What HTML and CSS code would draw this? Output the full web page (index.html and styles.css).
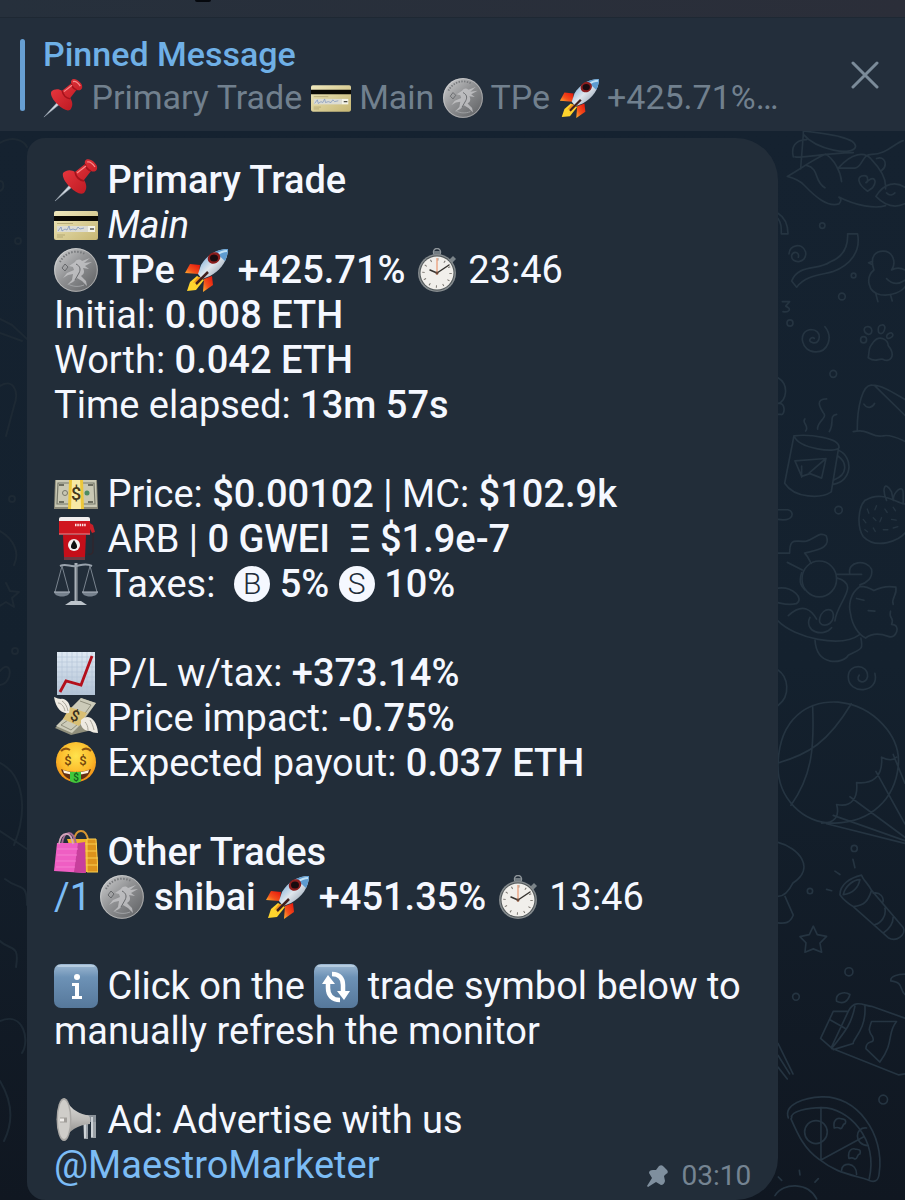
FILE: index.html
```html
<!DOCTYPE html>
<html lang="en">
<head>
    <meta charset="UTF-8">
    <meta name="viewport" content="width=device-width, initial-scale=1.0">
    <title>Trade Monitor</title>
    <link rel="stylesheet" href="styles.css">
</head>
<body>
    <!-- Shared icons -->
    <svg class="sprite" aria-hidden="true">
        <defs>
            <linearGradient id="gSilver" x1="0" y1="0" x2="1" y2="1">
                <stop offset="0" stop-color="#d3d4d5"/><stop offset=".45" stop-color="#929395"/><stop offset="1" stop-color="#5a5c5f"/>
            </linearGradient>
            <linearGradient id="gRed" x1="0" y1="0" x2="1" y2="1">
                <stop offset="0" stop-color="#ee3c43"/><stop offset="1" stop-color="#b5141d"/>
            </linearGradient>
            <linearGradient id="gCard" x1="0" y1="0" x2="1" y2="1">
                <stop offset="0" stop-color="#efe8bd"/><stop offset="1" stop-color="#c6b673"/>
            </linearGradient>
            <linearGradient id="gBody" x1="0" y1="0" x2="1" y2="1">
                <stop offset="0" stop-color="#4f97d3"/><stop offset=".5" stop-color="#dfe6ed"/><stop offset="1" stop-color="#76879a"/>
            </linearGradient>
            <linearGradient id="gFlame" x1="1" y1="0" x2="0" y2="1">
                <stop offset="0" stop-color="#e3120b"/><stop offset=".6" stop-color="#f4511c"/><stop offset="1" stop-color="#ffb52e"/>
            </linearGradient>
            <linearGradient id="gKey" x1="0" y1="0" x2="0" y2="1">
                <stop offset="0" stop-color="#9db8d2"/><stop offset=".3" stop-color="#6d92b6"/><stop offset="1" stop-color="#56789b"/>
            </linearGradient>
            <linearGradient id="gPaper" x1="0" y1="0" x2="0" y2="1">
                <stop offset="0" stop-color="#dfe9f3"/><stop offset="1" stop-color="#b3c3d5"/>
            </linearGradient>
            <linearGradient id="gHorn" x1="0" y1="0" x2="0" y2="1">
                <stop offset="0" stop-color="#e2e1df"/><stop offset=".5" stop-color="#bdbbb8"/><stop offset="1" stop-color="#7d7b79"/>
            </linearGradient>
            <radialGradient id="gFace" cx=".5" cy=".35" r=".65">
                <stop offset="0" stop-color="#ffe34d"/><stop offset=".65" stop-color="#fcb92a"/><stop offset="1" stop-color="#ef8d15"/>
            </radialGradient>
        </defs>

        <symbol id="pushpin" viewBox="0 0 44 44">
            <path d="M1 43 20 22l3 3z" fill="#cfd6de" stroke="#8d98a5" stroke-width=".6"/>
            <path d="M9 15c4-4 9-3 12-1l10-8c-1-4 2-6 6-4 4 2 7 6 6 9s-4 3-6 2l-7 9c3 5 3 9 0 13-4 2-9-1-14-6S8 19 9 15z" fill="url(#gRed)"/>
            <path d="M21 14c1 5 4 8 9 9M31 6c1 4 3 6 6 7" fill="none" stroke="#a4121b" stroke-width="1.6"/>
            <path d="M33 4c3-1 6 2 8 5M23 15l9-7" fill="none" stroke="#f98a8a" stroke-width="1.3"/>
        </symbol>

        <symbol id="card" viewBox="0 0 44 44">
            <rect y="8" width="44" height="29" rx="2" fill="url(#gCard)"/>
            <path d="M0 13h44v5H0z" fill="#0a0904"/>
            <path d="M3 23h31v6H3z" fill="#dcdcd4"/>
            <path d="M34 23h7v6h-7z" fill="#f4f3e8"/>
            <path d="m4 28 3-4 1 4 3-2 2 1 2-4 1 4 3-1 3 1 2-3 2 2 4-1" fill="none" stroke="#7f95bc" stroke-width=".8"/>
            <path d="M36 26h4" stroke="#4b4a42" stroke-width="1.4"/>
            <path d="M3 20.500h16M3 32h8M3 34h6" stroke="#a49a66" stroke-width=".7"/>
        </symbol>

        <symbol id="coin" viewBox="0 0 44 44">
            <circle cx="22" cy="22" r="22" fill="url(#gSilver)"/>
            <circle cx="22" cy="22" r="21.300" fill="none" stroke="#e0e1e2" stroke-opacity=".5" stroke-width="1"/>
            <path d="M6 14A18 18 0 0 1 31 6" fill="none" stroke="#77797c" stroke-width="2" stroke-dasharray="1.500 1.500"/>
            <path d="M21 14c2-3 5-3 7-1l8-3-6 5 8-1-7 4 4 3-6-1c2 4 1 6-2 8l5 5 1 5-5-5-5-3-4 4-6 3 5-5 1-6-5 1-5 3 4-5 7-3-1-3-4-1z" fill="#c9cacc" fill-opacity=".75"/>
            <path d="M22 16c4 2 5 5 3 9l-4 7M8 20l3-4 3 3-3 4z" fill="none" stroke="#66686b" stroke-width="1"/>
            <path d="M14 36c5 3 11 3 16 1" stroke="#a0a2a5" fill="none" stroke-width="1"/>
        </symbol>

        <symbol id="rocket" viewBox="0 0 44 44">
            <path d="M16 17 6 16 1 25l14 1z" fill="url(#gFlame)"/>
            <path d="m28 28 1 9-10 7 1-13z" fill="url(#gFlame)"/>
            <path d="m13 28-7 6-3 9 9-1 8-10z" fill="#ffd52d"/>
            <path d="m14 29-5 6 6-2-4 6 8-9z" fill="#f6971c"/>
            <path d="M44 1c-11 0-21 6-27 16l-3 9 4 5 8-3C37 22 44 12 44 1z" fill="url(#gBody)"/>
            <path d="M44 1c-5 0-9 1-13 3l10 9c2-4 3-8 3-12z" fill="#5d9bd0"/>
            <path d="M43 3c-4 0-8 2-11 4" stroke="#bfe0f5" stroke-width="2" fill="none"/>
            <ellipse cx="30" cy="10" rx="6.500" ry="5.500" transform="rotate(-30 30 10)" fill="#8b1d1d"/>
            <ellipse cx="30" cy="10" rx="4" ry="3.500" fill="#190c10"/>
            <path d="m12 36 12-12" stroke="#40201e" stroke-width="2.500"/>
        </symbol>

        <symbol id="stopwatch" viewBox="0 0 44 44">
            <circle cx="22" cy="4" r="3.500" fill="none" stroke="#8e959a" stroke-width="1.500"/>
            <path d="M19 3h6v7h-6z" fill="#737c82"/>
            <path d="m34 12 4-4 3 3-4 4z" fill="#7b8489"/>
            <circle cx="22" cy="25" r="19" fill="#858b8e"/>
            <circle cx="22" cy="25" r="17.500" fill="#4f5557"/>
            <circle cx="22" cy="25" r="16.500" fill="#f1efeb"/>
            <circle cx="22" cy="25" r="13.500" fill="none" stroke="#77736d" stroke-width="2.500" stroke-dasharray="1 6.070"/>
            <path d="M22 27V10" stroke="#eba888" stroke-width="1.500"/>
            <path d="m22 25-7-3M22 25l12-8" stroke="#36332f" stroke-width="1.500" stroke-linecap="round"/>
            <circle cx="22" cy="25" r="1.500" fill="#6c4a3a"/>
        </symbol>

        <symbol id="fuel" viewBox="0 0 44 44">
            <path d="M38 15c2 4 1 7 1 10v9c0 3-3 4-5 3" fill="none" stroke="#33252b" stroke-width="1.300"/>
            <path d="m34 5 5 3 2 7-3 1-2-4z" fill="#c92029"/>
            <path d="M5 3h31v14H5z" fill="#d0161f"/>
            <path d="M5 2q0-2 2-2h27q2 0 2 2v2H5z" fill="#f1eeee"/>
            <path d="M9 18h23l-1 22H10z" fill="#c50e19"/>
            <path d="M5 17h31" stroke="#e4656c" stroke-width="1.500"/>
            <path d="M10 40h21v3H10z" fill="#6a3a42"/>
            <path d="M21 8h11" stroke="#ffe5e5" stroke-width="2.500" stroke-dasharray="1.500 .8"/>
            <circle cx="20" cy="28" r="6" fill="#f4f1f1"/>
            <path d="M20 23c-5 7-3 9 0 9s5-2 0-9z" fill="#111"/>
        </symbol>

        <symbol id="scales" viewBox="0 0 44 44">
            <path d="M22 1v39" stroke="#a9b0b8" stroke-width="3"/>
            <path d="M23 3v36" stroke="#5e666f" stroke-width="1"/>
            <path d="M6 4c6-3 10 1 16 0s10-3 16 0" fill="none" stroke="#99a2ac" stroke-width="2"/>
            <path d="M8 4 1 30M8 4l7 26M36 4l-7 26M36 4l7 26" stroke="#79838e" stroke-width="1"/>
            <path d="M0 30h16c-1 6-15 6-16 0zM28 30h16c-1 6-15 6-16 0z" fill="#76818d"/>
            <path d="M0 30h16M28 30h16" stroke="#b4bcc5" stroke-width="1.200"/>
            <path d="M17 39h10l6 4H11z" fill="#bcc3ca"/>
        </symbol>

        <symbol id="chart" viewBox="0 0 44 44">
            <path d="M3 1h38v43H3z" fill="url(#gPaper)"/>
            <path d="M8 1v43M13 1v43M18 1v43M23 1v43M28 1v43M33 1v43M38 1v43M3 6h38M3 11h38M3 16h38M3 21h38M3 26h38M3 31h38M3 36h38M3 41h38" stroke="#b4c5d7" stroke-width=".6"/>
            <path d="m6 41 6-11 15 4L38 5" fill="none" stroke="#b30f1b" stroke-width="2.800"/>
        </symbol>

        <symbol id="bags" viewBox="0 0 44 44">
            <path d="M20 10C22-2 32-2 34 10" fill="none" stroke="#d99732" stroke-width="2"/>
            <path d="M13 9h29l2 33H25z" fill="#efb32a"/>
            <path d="M33 9h9l2 33H33zM16 14h27M17 21h26M17 28h27M17 35h27" fill="#dc931c" stroke="#f9cf50"/>
            <path d="M8 14C10 0 19-1 22 14" fill="none" stroke="#a56a92" stroke-width="2"/>
            <path d="M3 13h21l7 30-31-2z" fill="#ef5ec3"/>
            <path d="m24 13 7-1 1 31-12-1z" fill="#c83f9c"/>
            <path d="M5 14C7 1 17 0 19 14" fill="none" stroke="#d5a6bd" stroke-width="1.800"/>
            <path d="M3 19h21M3 25h20M2 31h20M2 37h19" stroke="#f688d3" stroke-width=".8"/>
        </symbol>

        <symbol id="info" viewBox="0 0 44 44">
            <rect width="44" height="44" rx="7" fill="url(#gKey)"/>
            <path d="M4 2h36" stroke="#c1d5e6" stroke-width="1.500" stroke-linecap="round"/>
            <circle cx="23" cy="13" r="3" fill="#fff"/>
            <path d="M18 19h7v13h3v3H18v-3h3V22h-3z" fill="#fff"/>
        </symbol>

        <symbol id="refresh" viewBox="0 0 44 44">
            <rect width="44" height="44" rx="7" fill="url(#gKey)"/>
            <path d="M4 2h36" stroke="#c1d5e6" stroke-width="1.500" stroke-linecap="round"/>
            <path d="M26 36c-8 0-12-5-12-12v-7M18 10c8 0 11 5 11 11v8" fill="none" stroke="#fff" stroke-width="4.500"/>
            <path d="m8 20 6-9 7 9zM23 27h13l-6 9z" fill="#fff"/>
        </symbol>

        <symbol id="horn" viewBox="0 0 44 44">
            <path d="M29 20h5v21h-4zM37 17h5v23h-5z" fill="#9ba1a7"/>
            <path d="M30 17h12v7H30z" fill="#8a9198"/>
            <path d="M31 26v14M38 19v20" stroke="#e0e4e7" stroke-width="1.500"/>
            <path d="M10 0c6 9 12 15 22 17q4 0 4 4v5c-12 1-21 6-26 17z" fill="url(#gHorn)"/>
            <ellipse cx="10" cy="21.500" rx="7.500" ry="21.500" fill="#aaa8a5"/>
            <ellipse cx="10" cy="21.500" rx="6" ry="19.500" fill="#cfcdc9"/>
            <path d="M6 22h7" stroke="#a19e9a" stroke-width="5"/>
            <path d="M6 22h4" stroke="#eeece9" stroke-width="3"/>
        </symbol>

        <symbol id="pin-small" viewBox="0 0 22 22">
            <path d="M13 1q3-2 5 1l3 3q2 3-1 4l-2 2 1 5q-1 4-4 4l-5-3-8 5-1-1 5-8-3-5q0-3 4-3h3z" fill="#7f8f9e"/>
        </symbol>
    </svg>

    <div class="top-strip"><span class="camera"></span></div>

    <header class="pinned">
        <span class="pinned-bar"></span>
        <div class="pinned-text">
            <div class="pinned-title">Pinned Message</div>
            <div class="pinned-preview"><svg class="emoji"><use href="#pushpin"/></svg> Primary Trade <svg class="emoji"><use href="#card"/></svg> Main <svg class="emoji"><use href="#coin"/></svg> TPe <svg class="emoji"><use href="#rocket"/></svg> +425.71%…</div>
        </div>
        <button class="close" aria-label="Close pinned message">
            <svg width="28" height="28" viewBox="0 0 28 28"><path d="m2 2 24 24M26 2 2 26" stroke="#7b8b99" stroke-width="3" stroke-linecap="round"/></svg>
        </button>
    </header>

    <main class="chat">
        <!-- Wallpaper doodles -->
        <svg class="wallpaper" viewBox="0 0 905 1069" preserveAspectRatio="xMaxYMin slice" aria-hidden="true">
            <g transform="translate(770 0) scale(.333 .344)">
                <path d="M100 10c40 45 150 65 157 35 0-25-70-35-157-45zM100 10l-8 100M70 75c-10-40 20-50 40-50M75 75c30 5 80-10 175-12M52 132c45-25 70-45 115-65 25 15 45 50 48 80M110 100c40 10 20 45 55 65M52 132c20 5 35 10 50 25 35 35 70 65 105 55 10-10 5-15 0-20 50 25 110 35 140 25M205 108c40-45 80-50 100-25 35 35 45 60 42 85M205 108h50c25-5 20-40 50-40 45 0 65-30 95-40M318 190c25-40 60-45 90-25M318 190c30 30 60 35 90 20M350 180c10 10 20 5 25 0M293 175c-30-20-35-45-10-45 15 0 10 20 5 20 25-25 35-5 20 15zM320 80c25-10 35 20 15 35"/>
                <g transform="translate(0 129)">
                    <path d="M24 110c25 15 30 40 30 60H34c0-20 0-30-10-45M57 228c0-25 40-35 50-5 5 35-45 35-42 10 5-15 25-10 20 5M233 170h30c10 50-20 90-75 110-35 10-80 10-108 45l-15-18c20-50 80-30 115-55 40-15 55-45 53-82zM312 275c-15-45 10-55 28-55 30 0 40 35 25 55 15-8 30-5 40 0M308 260l-12-6 12-4M312 275c-25 20-20 65 20 72 35 5 65-10 75-25M350 300c20 20 40 15 55 5M318 345l6 22M362 347l5 18M165 440c25 30 10 75-30 73-40 0-55-60-12-65 35 0 30 45 5 38-20-5 0-20 5-12M295 530c5-30 0-25 15-45 20-25 45-5 45 10 25 30 5 50-15 40-15-5-20 12-45-5zM290 440c20-5 20 25 5 22s-15-20-5-22zM335 435c18-3 8 25-2 25s-12-23 2-25zM365 458c12 8-5 18-13 15-5-8 4-16 13-15z"/>
                    <circle cx="157" cy="146" r="8"/><circle cx="251" cy="291" r="7"/><circle cx="216" cy="352" r="10"/><circle cx="60" cy="429" r="9"/><circle cx="190" cy="577" r="10"/><circle cx="206" cy="973" r="11"/><circle cx="281" cy="478" r="9"/>
                    <path d="M37 367h22l-12 13c20 8 10 20-8 16M262 740c0-65 15-135 45-130 35 0 75 30 105 45M250 745c50-10 55 20 90 12 25-5 50 10 70 18M282 665c10 15 25 10 32-2M315 612l95 90M24 588c35 20 25 70 0 75 25-5 20 35 10 32H24M72 757c45-5 140 5 135 35-5 15-120 5-135-35zM72 757 44 895c30 45 110 45 140 25l22-128M207 800c45 20 40 90-18 98M203 815c30 20 30 55-10 70M75 830l93-7-13 57-35-13-25 8-20-45zM168 823l-50 42M95 845v32M170 650c-35 0-20 25-10 40 15 15-20 25-17 48M200 695c-25 5-5 25-22 50M105 708c-12 10 15 20 2 35"/>
                    <path d="M285 945c50-30 90 5 118 10M285 945c-20 20-25 75-5 105 40 40 110 10 125-10M350 945c-15-35-5-60 15-25l5 25c0-25 30-50 30-20v30"/>
                    <path class="seeds" d="m292 970 5 12M320 960l-5 12M345 970l7 10M370 965l7 10M280 1000l8 10M310 995l8 8M335 995l-5 12M365 1000l14 2M285 1030l8 6M310 1025l6 10M340 1030h14M370 1025l14-4"/>
                    <circle cx="148" cy="1173" r="52"/>
                    <path d="M24 1098h35c0-50 20-30 50-35 25-5 40-30 60-15 15 35-25 40-65 50 15 15 15 25 20 30M24 972h30c20 5 20 35-30 28M52 1125l45 22M95 1155c-10 30 0 40 10 50M200 1160h75M240 1160c-10-40 50-45 65-15 5 25-15 40-35 45M24 1200c45-5 80 30 55 45-25 5-40 0-55-3M200 1170c75 20 0 70-5 125M55 1280c45-40 70-15 85 10M270 1195c-30 20-35 55-28 80 5 35 25 60 45 70 20-15 40-15 68-5 25 10 40-35 10-35 10-20-10-15-3-38M270 1195c20 0 30 5 42 12 20-10 40-15 66-10 5 25-15 30-8 50M24 1295c50 50 190 80 245 40M120 1285c-20 40 40 60 65 30M135 1350c5 80 85 70 100 45 40-20 45-15 38-50M150 1285c10-30 45-30 40 0s-50 30-40 0zM260 1230l22 5M295 1265l20 2"/>
                </g>
            </g>
            <g transform="translate(770 539) scale(.333 .338)">
                <path d="M24 0c30 20 40 75 0 105M315 10c15 60-80 65-80 10 0-40 60-40 58 0-5 25-40 15-25-5"/>
                <path d="M24 275C30 140 115 90 205 95c105 10 190 100 180 190-10 95-80 165-190 168C100 455 20 380 24 275zM24 275c90-25 150-60 220-175M128 105c5 120 0 205-65 295M155 453c40 0 55-20 45-55 45 10 65-20 60-65 45 5 80-15 75-75 20 10 35 10 45 0M190 430l215 75M240 375l165 120M318 300l87 155M370 250l35 85M170 455l235 58"/>
                <path d="M24 510c60 15 115 75 45 120-10 20-25 40-45 40M45 670l25 55c-10 25-25 25-46 23M210 665c0-30 30-50 65-58 5 15 20 25 30 45-10 30-20 45-55 48-10-5-30-20-40-35zM220 665c5-25 30-45 50-45-5 25-20 40-50 45zM305 652l95 110c10 20-20 45-45 30L250 700M310 660c20-5 35 15 28 28M345 705c5 20-10 45-30 48M370 730c0 20-10 35-30 48M255 585l-6-25M210 605l-15-10M185 653l-15-4M130 758l12 25 28 5-20 20 5 27-25-10-25 10 3-28-18-18 28-6z"/>
                <circle cx="253" cy="528" r="9"/><circle cx="120" cy="654" r="8"/><circle cx="237" cy="893" r="12"/><circle cx="78" cy="967" r="10"/><circle cx="340" cy="1271" r="13"/>
                <path d="M405 900c-20 0-45 5-42 20 40 5 25 25 42 40M200 980c-5-25 25-30 40-20-5 20-20 30-40 20zM190 1010l-38 80 35 30 200 78 18-3M190 1010h45c20-40 50-15 70-15l100 35M235 1010l-50 105M180 1035l45 25M255 995c-10 50-25 70-70 125M285 995c5 70-40 100-35 110l-60 18M305 1040h75c-30 35-5 60-50 120l-42-40c0-30 30-10 20-35-15-20-10-25-3-45zM24 1140l35 55M24 1175l28 35M24 1105l45 90"/>
                <path d="M55 1325c-15-40 50-60 100-62 105-5 190 110 173 225-2 25-15 30-35 20-70-20-100-25-145-60-45-30-65-75-85-120M65 1325c-5-20 50-30 90-30 80 0 170 90 143 210M153 1295v155l130-70"/><circle cx="138" cy="1367" r="34"/>
                <path d="M290 1355c-35-5-40 50 5 52M215 1480c0-25 45-25 45 12M193 1355c-5-25 10-30 18-28s20 0 15 15c-10 0-5 15-15 15-8-5-5-5-18-2zM237 1445c-5-25 10-30 18-28s20 0 15 15c-10 0-5 15-15 15-8-5-5-5-18-2zM15 1555c25-40 100-40 125 10M88 1480l2 14M25 1500l10 10M145 1505l-10 10"/>
            </g>
            <g class="left-doodles">
                <path d="M0 12c14-8 24-2 27 4M0 50c4 0 5 8 0 10M0 188l12 6 15 14M0 202l22 8M0 255c12-8 20 4 14 20l-8 30M0 400c14 8 20 22 14 34M6 452l4 8 9 1-7 6 2 9-8-5-8 5M0 540c12-14 14 12 0 14M0 632c24 12 28 48 14 82M0 700l27 18M5 748c15 12 22 2 22 26M0 810c10 10 20 2 16 26M0 890c24-10 30 20 22 32M0 950c12 20 14 40 4 60"/>
                <circle cx="18" cy="110" r="3"/><circle cx="12" cy="368" r="3"/><circle cx="15" cy="520" r="3"/>
            </g>
        </svg>

        <article class="message">
            <p>
                <svg class="emoji"><use href="#pushpin"/></svg> <b>Primary Trade</b><br>
                <svg class="emoji"><use href="#card"/></svg> <i>Main</i><br>
                <svg class="emoji"><use href="#coin"/></svg> <b>TPe</b> <svg class="emoji"><use href="#rocket"/></svg> <b>+425.71%</b> <svg class="emoji"><use href="#stopwatch"/></svg> 23:46<br>
                Initial: <b>0.008 ETH</b><br>
                Worth: <b>0.042 ETH</b><br>
                Time elapsed: <b>13m 57s</b>
            </p>
            <p>
                <svg class="emoji" viewBox="0 0 44 44">
                    <path d="M1 8h42l1 29H0z" fill="#8d8b7a"/>
                    <path d="M2 8h40l1 27H1z" fill="#c9c8b4"/>
                    <path d="M4 11h36l1 21H3z" fill="none" stroke="#77786a" stroke-width="1.200"/>
                    <circle cx="11" cy="21" r="2.500" fill="none" stroke="#77786a"/>
                    <circle cx="33" cy="21" r="2.500" fill="#4d8b61"/>
                    <path d="M5 13h5M5 30h5M34 13h5M34 30h5" stroke="#6d6e60" stroke-width="2"/>
                    <path d="M15 8h14l1 29H14z" fill="#edc73b"/>
                    <path d="M18 8h8l1 29H17z" fill="#f8e9a6"/>
                    <text x="22" y="28" class="glyph" font-size="18" fill="#42371a">$</text>
                </svg> Price: <b>$0.00102</b> | MC: <b>$102.9k</b><br>
                <svg class="emoji"><use href="#fuel"/></svg> ARB | <b>0 GWEI &nbsp;Ξ $1.9e-7</b><br>
                <svg class="emoji"><use href="#scales"/></svg> Taxes: &nbsp;<span class="round">B</span> <b>5%</b> <span class="round">S</span> <b>10%</b>
            </p>
            <p>
                <svg class="emoji"><use href="#chart"/></svg> P/L w/tax: <b>+373.14%</b><br>
                <svg class="emoji" viewBox="0 0 44 44">
                    <path d="m14 15 13-13 15 5-12 17 4 11-17 4-16-7 10-10z" fill="#908f7c"/>
                    <path d="m14 15 13-13 15 5-13 17zM2 30l9-9 17 6-10 10z" fill="#cccbb9"/>
                    <path d="m26 5 11 4-8 11M7 29l7-5 10 4-7 6z" fill="none" stroke="#8f8e7c"/>
                    <path d="m16 11 17 6-8 13-16-7z" fill="#d9bf74"/>
                    <path d="M15 17C9 18 2 14 0 1c3 1 5 2 7 2 4-1 8 3 9 8z" fill="#eeeae1"/>
                    <path d="M27 24c7-7 16-1 17 13-4 0-6-1-8-2-5 0-8-3-9-6z" fill="#eeeae1"/>
                    <path d="M4 7c3 0 6 3 7 8M8 5c3 2 5 5 6 10M31 26c2 2 3 5 3 8M36 24c2 3 3 6 4 10" stroke="#aaa69b" fill="none"/>
                    <text x="21" y="25" class="glyph" font-size="15" fill="#3b301d" transform="rotate(20 21 20)">$</text>
                </svg> Price impact: <b>-0.75%</b><br>
                <svg class="emoji" viewBox="0 0 44 44">
                    <circle cx="22" cy="21" r="20" fill="url(#gFace)"/>
                    <path d="M7 10c3-3 6-3 9-1M28 9c3-2 6-2 9 1" fill="none" stroke="#8d5410" stroke-width="2"/>
                    <path d="M7 28c8 4 22 4 30 0-2 8-8 11-15 11S9 36 7 28z" fill="#653014"/>
                    <path d="M9 29c8 3 18 3 26 0l-1 3c-8 2-16 2-24 0z" fill="#fff4df"/>
                    <path d="M16 31h11v9q-5 4-11 0z" fill="#41c73b"/>
                    <text x="14" y="24" class="glyph" font-size="13" fill="#73440c">$</text>
                    <text x="29" y="24" class="glyph" font-size="13" fill="#73440c">$</text>
                    <text x="22" y="40" class="glyph" font-size="10" fill="#145b1b">$</text>
                </svg> Expected payout: <b>0.037 ETH</b>
            </p>
            <p>
                <svg class="emoji"><use href="#bags"/></svg> <b>Other Trades</b><br>
                <a href="#">/1</a> <svg class="emoji"><use href="#coin"/></svg> <b>shibai</b> <svg class="emoji"><use href="#rocket"/></svg> <b>+451.35%</b> <svg class="emoji"><use href="#stopwatch"/></svg> 13:46
            </p>
            <p>
                <svg class="emoji"><use href="#info"/></svg> Click on the <svg class="emoji"><use href="#refresh"/></svg> trade symbol below to manually refresh the monitor
            </p>
            <div class="last">
                <p>
                    <svg class="emoji"><use href="#horn"/></svg> Ad: Advertise with us<br>
                    <a href="#">@MaestroMarketer</a>
                </p>
                <div class="meta">
                    <svg width="22" height="22"><use href="#pin-small"/></svg>
                    <time>03:10</time>
                </div>
            </div>
        </article>
    </main>
</body>
</html>
```
FILE: styles.css
```css
* {
    box-sizing: border-box;
}
body {
    margin: 0;
    min-height: 100vh;
    display: flex;
    flex-direction: column;
    font-family: Roboto, "Noto Sans", sans-serif;
    background-color: #141f2b;
    color: #f5f8ff;
}
.sprite {
    position: absolute;
    width: 0;
    height: 0;
}
.glyph {
    font-family: Roboto, sans-serif;
    font-weight: 500;
    text-anchor: middle;
}
.top-strip {
    height: 17px;
    padding-left: 195px;
    background: linear-gradient(90deg, #26303c, #2b2e39);
}
.camera {
    display: block;
    width: 16px;
    height: 2px;
    border-radius: 0 0 8px 8px;
    background-color: #05080d;
}

/* Pinned message bar */
.pinned {
    display: flex;
    align-items: center;
    height: 114px;
    padding: 0 20px;
    border-top: 1px solid #1e2833;
    background-color: #232e3b;
}
.pinned-bar {
    width: 5px;
    height: 72px;
    margin-right: 18px;
    border-radius: 3px;
    background-color: #679fd2;
}
.pinned-text {
    flex: 1;
    min-width: 0;
    padding-top: 2px;
    font-size: 34px;
    line-height: 43px;
    white-space: nowrap;
}
.pinned-title {
    color: #6fb0e6;
    font-weight: 500;
}
.pinned-preview {
    color: #71808e;
    overflow: hidden;
    text-overflow: ellipsis;
}
.pinned-preview .emoji {
    width: 40px;
    height: 40px;
    margin-top: 2px;
}
.close {
    display: flex;
    padding: 6px;
    border: none;
    background: none;
    cursor: pointer;
}

/* Chat */
.chat {
    position: relative;
    flex: 1;
    padding: 7px 14% 0 27px;
    overflow: hidden;
    background: linear-gradient(180deg, #152230 0%, #14212e 50%, #101721 100%);
}
.wallpaper {
    position: absolute;
    top: 0;
    left: 0;
    width: 100%;
    height: 100%;
    fill: none;
    stroke: #253441;
    stroke-width: 5px;
    stroke-linejoin: round;
    stroke-linecap: round;
}
.wallpaper .seeds {
    stroke-width: 4px;
}
.left-doodles {
    stroke: #1d2934;
    stroke-width: 2px;
}
.message {
    position: relative;
    display: flex;
    flex-direction: column;
    gap: 44px;
    padding: 20px 27px 12px;
    border-radius: 18px 42px 42px 18px;
    background-color: #222d39;
    font-size: 38px;
    line-height: 45px;
}
.message p {
    margin: 0;
}
.message b {
    font-weight: 500;
}
.message a {
    color: #7cbcf5;
    text-decoration: none;
}
.emoji {
    width: 44px;
    height: 44px;
    vertical-align: top;
}
.round {
    display: inline-block;
    width: 36px;
    height: 36px;
    margin-top: 4px;
    border-radius: 50%;
    background-color: #f5f8ff;
    color: #222d39;
    font-size: 30px;
    font-weight: 300;
    line-height: 36px;
    text-align: center;
    vertical-align: top;
}
.last {
    display: flex;
    justify-content: space-between;
    align-items: flex-end;
}
.meta {
    display: flex;
    align-items: center;
    gap: 14px;
    color: #758492;
    font-size: 28px;
    line-height: 30px;
    margin-bottom: -3px;
}
```
